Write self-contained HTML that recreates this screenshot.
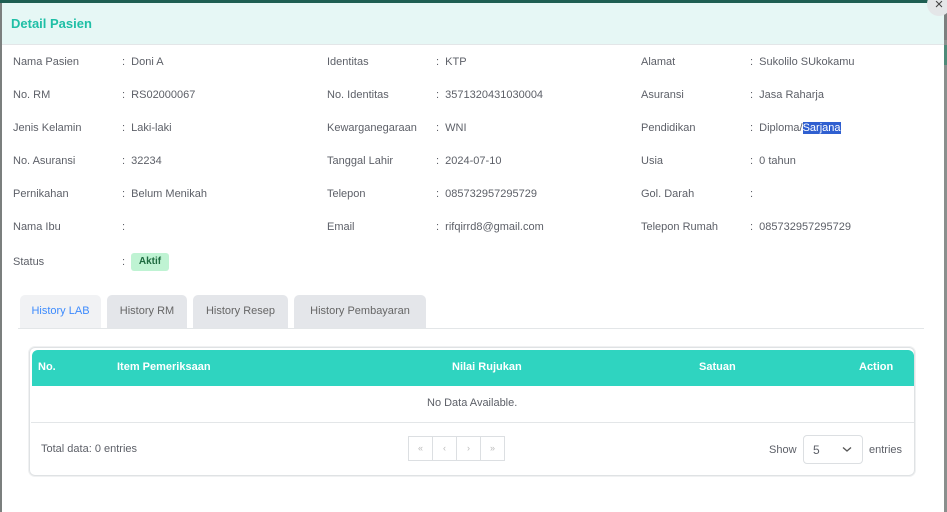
<!DOCTYPE html>
<html><head><style>
*{margin:0;padding:0;box-sizing:border-box}
body{width:947px;height:512px;overflow:hidden;background:#7b7f7e;font-family:"Liberation Sans",sans-serif;position:relative}
.top{position:absolute;left:0;top:0;width:947px;height:3px;background:#1e5e52}
.rs{position:absolute;left:944px;top:40px;width:3px;height:472px;background:#8a8f8d}
.rs2{position:absolute;left:944px;top:45px;width:3px;height:20px;background:#4e8a78}
.modal{position:absolute;left:2px;top:3px;width:942px;height:509px;background:#fff}
.hdr{position:absolute;left:0;top:0;width:942px;height:42px;background:#e6f7f5;border-bottom:1px solid #e3e6e8}
.hdr span{position:absolute;left:9px;top:13px;font-size:13px;font-weight:bold;color:#1fbfa6}
.close{position:absolute;left:927px;top:-8px;width:24px;height:24px;border-radius:50%;background:#e4e6e8;color:#444;font-size:15px;text-align:center;line-height:26px}
.t{position:absolute;font-size:11px;color:#5d6068;white-space:nowrap}
.sel{background:#2f5fd0;color:#fff}
.badge{position:absolute;left:131px;top:253px;width:38px;height:18px;background:#bff3d3;border-radius:3px;color:#1e6b40;font-size:10px;font-weight:bold;text-align:center;line-height:18px}
.tab{position:absolute;top:295px;height:33px;background:#e4e6ea;border-radius:5px 5px 0 0;font-size:11px;color:#666;text-align:center;line-height:33px}
.tabline{position:absolute;left:18px;top:328px;width:906px;height:1px;background:#e3e6e8}
.card{position:absolute;left:29px;top:347px;width:886px;height:129px;border:1px solid #dfe2e4;border-radius:6px;box-shadow:0 0 0 1px #f0f1f2}
.th{position:absolute;left:32px;top:350px;width:882px;height:36px;background:#2fd4c0;border-radius:6px 6px 0 0}
.th span{position:absolute;top:11px;font-size:11px;font-weight:bold;color:#fff}
.pg{position:absolute;left:408px;top:436px;width:97px;height:25px;border:1px solid #dcdfe2;display:flex}
.pg div{flex:1;border-right:1px solid #dcdfe2;font-size:9px;color:#bbb;text-align:center;line-height:23px}
.pg div:last-child{border:none}
.selb{position:absolute;left:803px;top:435px;width:60px;height:29px;border:1px solid #dcdfe2;border-radius:4px}
</style></head><body>
<div class="top"></div><div class="rs"></div><div class="rs2"></div>
<div class="modal">
<div class="hdr"><span>Detail Pasien</span></div>
</div>
<div class="close">×</div>
<div class="t" style="left:13px;top:56px">Nama Pasien</div><div class="t" style="left:122px;top:56px">:&nbsp; Doni A</div>
<div class="t" style="left:13px;top:89px">No. RM</div><div class="t" style="left:122px;top:89px">:&nbsp; RS02000067</div>
<div class="t" style="left:13px;top:122px">Jenis Kelamin</div><div class="t" style="left:122px;top:122px">:&nbsp; Laki-laki</div>
<div class="t" style="left:13px;top:155px">No. Asuransi</div><div class="t" style="left:122px;top:155px">:&nbsp; 32234</div>
<div class="t" style="left:13px;top:188px">Pernikahan</div><div class="t" style="left:122px;top:188px">:&nbsp; Belum Menikah</div>
<div class="t" style="left:13px;top:221px">Nama Ibu</div><div class="t" style="left:122px;top:221px">:</div>
<div class="t" style="left:13px;top:256px">Status</div><div class="t" style="left:122px;top:256px">:</div>
<div class="badge">Aktif</div>
<div class="t" style="left:327px;top:56px">Identitas</div><div class="t" style="left:436px;top:56px">:&nbsp; KTP</div>
<div class="t" style="left:327px;top:89px">No. Identitas</div><div class="t" style="left:436px;top:89px">:&nbsp; 3571320431030004</div>
<div class="t" style="left:327px;top:122px">Kewarganegaraan</div><div class="t" style="left:436px;top:122px">:&nbsp; WNI</div>
<div class="t" style="left:327px;top:155px">Tanggal Lahir</div><div class="t" style="left:436px;top:155px">:&nbsp; 2024-07-10</div>
<div class="t" style="left:327px;top:188px">Telepon</div><div class="t" style="left:436px;top:188px">:&nbsp; 085732957295729</div>
<div class="t" style="left:327px;top:221px">Email</div><div class="t" style="left:436px;top:221px">:&nbsp; rifqirrd8@gmail.com</div>
<div class="t" style="left:641px;top:56px">Alamat</div><div class="t" style="left:750px;top:56px">:&nbsp; Sukolilo SUkokamu</div>
<div class="t" style="left:641px;top:89px">Asuransi</div><div class="t" style="left:750px;top:89px">:&nbsp; Jasa Raharja</div>
<div class="t" style="left:641px;top:122px">Pendidikan</div><div class="t" style="left:750px;top:122px">:&nbsp; Diploma/<span class="sel">Sarjana</span></div>
<div class="t" style="left:641px;top:155px">Usia</div><div class="t" style="left:750px;top:155px">:&nbsp; 0 tahun</div>
<div class="t" style="left:641px;top:188px">Gol. Darah</div><div class="t" style="left:750px;top:188px">:</div>
<div class="t" style="left:641px;top:221px">Telepon Rumah</div><div class="t" style="left:750px;top:221px">:&nbsp; 085732957295729</div>
<div class="tab" style="left:20px;width:81px;background:#f1f2f4;color:#3d8bfd">History LAB</div>
<div class="tab" style="left:107px;width:80px">History RM</div>
<div class="tab" style="left:193px;width:95px">History Resep</div>
<div class="tab" style="left:294px;width:132px">History Pembayaran</div>
<div class="tabline"></div>
<div class="card"></div>
<div class="th"><span style="left:6px">No.</span><span style="left:85px">Item Pemeriksaan</span><span style="left:420px">Nilai Rujukan</span><span style="left:667px">Satuan</span><span style="left:827px">Action</span></div>
<div class="t" style="left:427px;top:397px">No Data Available.</div>
<div style="position:absolute;left:31px;top:422px;width:883px;height:1px;background:#e3e6e8"></div>
<div class="t" style="left:41px;top:443px">Total data: 0 entries</div>
<div class="pg"><div>«</div><div>‹</div><div>›</div><div>»</div></div>
<div class="t" style="left:769px;top:444px">Show</div>
<div class="selb"></div>
<div class="t" style="left:813px;top:443px;font-size:12px">5</div>
<svg style="position:absolute;left:842px;top:446px" width="10" height="7" viewBox="0 0 10 7"><path d="M1 1.5 L5 5 L9 1.5" fill="none" stroke="#555" stroke-width="1.3"/></svg>
<div class="t" style="left:869px;top:444px">entries</div>
</body></html>
